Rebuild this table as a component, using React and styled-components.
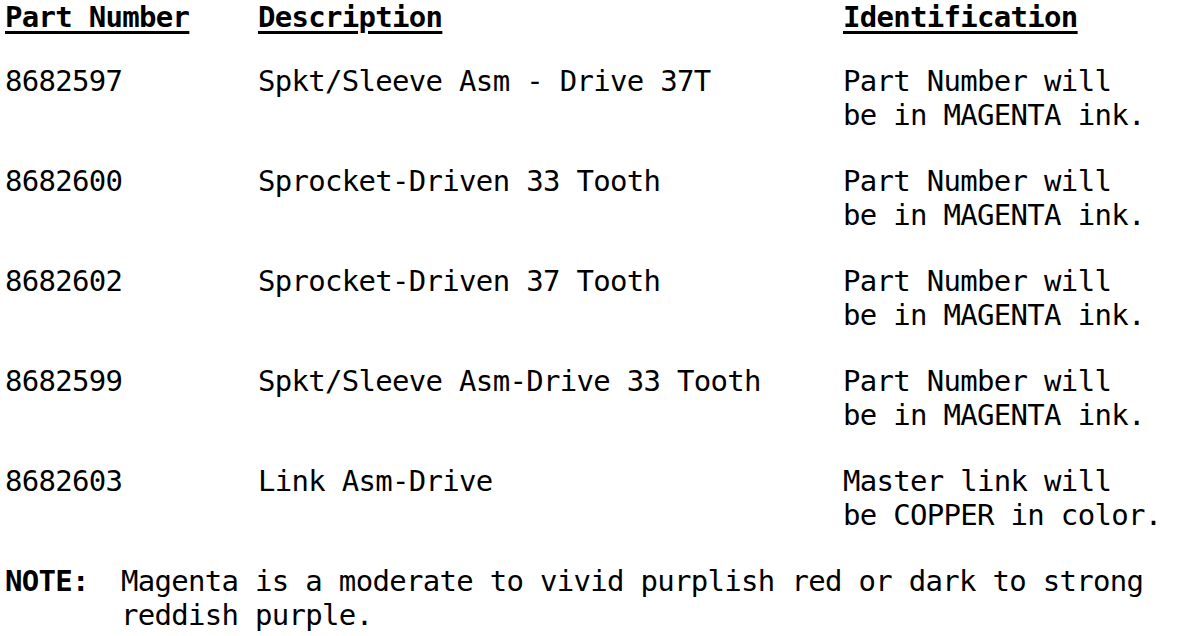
import React from "react";
import styled, { createGlobalStyle } from "styled-components";

const Global = createGlobalStyle`
  html, body { margin: 0; padding: 0; background: #ffffff; }
  body {
    color: #000000;
    font-family: "DejaVu Sans Mono", "Liberation Mono", monospace;
    font-size: 29px;
    letter-spacing: -0.7px;
  }
`;

const Page = styled.div`
  width: 1184px;
  height: 636px;
  padding: 0 0 0 5px;
  box-sizing: border-box;
  overflow: hidden;
`;

const Table = styled.div`
  display: grid;
  grid-template-columns: 253px 585px 1fr;
  row-gap: 32px;
`;

const HeaderCell = styled.div`
  font-weight: bold;
  line-height: 34px;
  margin-bottom: -2px;
  white-space: pre;
  span {
    text-decoration: underline;
    text-decoration-thickness: 3px;
    text-underline-offset: 4px;
  }
`;

const Cell = styled.div`
  line-height: 34px;
  white-space: pre;
  height: 68px;
`;

const Note = styled.div`
  display: grid;
  grid-template-columns: 116px 1fr;
  margin-top: 32px;
  line-height: 34px;
`;

const NoteLabel = styled.div`
  font-weight: bold;
`;

const NoteText = styled.div`
  max-width: 1040px;
`;

const rows = [
  ["8682597", "Spkt/Sleeve Asm - Drive 37T", ["Part Number will", "be in MAGENTA ink."]],
  ["8682600", "Sprocket-Driven 33 Tooth", ["Part Number will", "be in MAGENTA ink."]],
  ["8682602", "Sprocket-Driven 37 Tooth", ["Part Number will", "be in MAGENTA ink."]],
  ["8682599", "Spkt/Sleeve Asm-Drive 33 Tooth", ["Part Number will", "be in MAGENTA ink."]],
  ["8682603", "Link Asm-Drive", ["Master link will", "be COPPER in color."]],
];

export default function App() {
  return (
    <>
      <Global />
      <Page>
        <Table>
          <HeaderCell><span>Part Number</span></HeaderCell>
          <HeaderCell><span>Description</span></HeaderCell>
          <HeaderCell><span>Identification</span></HeaderCell>
          {rows.map(([pn, desc, ident]) => (
            <React.Fragment key={pn}>
              <Cell>{pn}</Cell>
              <Cell>{desc}</Cell>
              <Cell>
                {ident[0]}
                <br />
                {ident[1]}
              </Cell>
            </React.Fragment>
          ))}
        </Table>
        <Note>
          <NoteLabel>NOTE:</NoteLabel>
          <NoteText>
            Magenta is a moderate to vivid purplish red or dark to strong reddish purple.
          </NoteText>
        </Note>
      </Page>
    </>
  );
}
